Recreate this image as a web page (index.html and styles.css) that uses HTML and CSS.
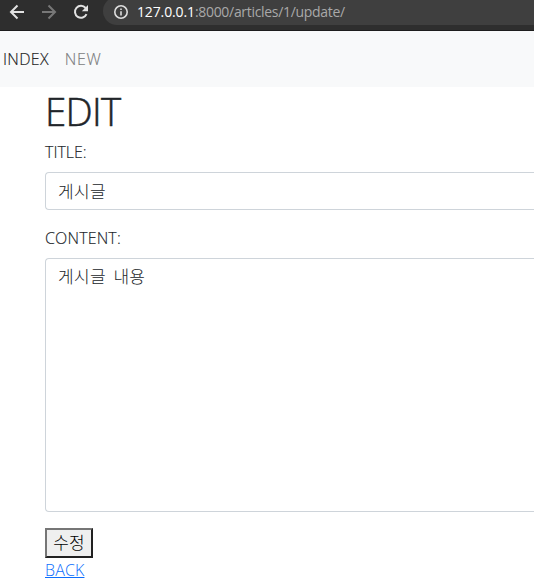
FILE: index.html
```html
<!DOCTYPE html>
<html lang="ko">
<head>
<meta charset="utf-8">
<title>EDIT</title>
<link rel="stylesheet" href="styles.css">
</head>
<body>
<header class="browser">
  <svg class="icon back" width="16" height="16" viewBox="0 0 16 16"><path d="M15 8H2M8.500 1.500L2 8l6.500 6.500"/></svg>
  <svg class="icon forward" width="16" height="16" viewBox="0 0 16 16"><path d="M1 8h13M7.500 1.500L14 8l-6.500 6.500"/></svg>
  <svg class="icon reload" width="16" height="16" viewBox="0 0 16 16"><path d="M13.500 10.200A6 6 0 1 1 12.600 4"/><path class="solid" d="M15 1v6.200H8.800z"/></svg>
  <div class="address">
    <svg class="info" width="14" height="14" viewBox="0 0 14 14"><circle cx="7" cy="7" r="6.200"/><path d="M7 6.200v4.300M7 3.400v1.600"/></svg>
    <span class="url"><span class="host">127.0.0.1</span><span class="path">:8000/articles/1/update/</span></span>
  </div>
</header>
<nav class="navbar">
  <a class="nav-link active">INDEX</a>
  <a class="nav-link">NEW</a>
</nav>
<main class="container">
  <h1>EDIT</h1>
  <form>
    <label for="title">TITLE:</label>
    <input id="title" class="control" type="text" value="게시글">
    <label class="wide" for="content">CONTENT:</label>
    <textarea id="content" class="control">게시글 내용</textarea>
    <button type="button">수정</button>
  </form>
  <a class="back-link" href="#">BACK</a>
</main>
</body>
</html>
```
FILE: styles.css
```css
* { box-sizing: border-box; }
body {
  margin: 0;
  height: 583px;
  overflow: hidden;
  background: #fff;
  color: #212529;
  font: 300 16px/24px "Open Sans", "Noto Sans CJK KR", sans-serif;
}
.browser {
  display: flex;
  height: 31px;
  padding: 0 0 6px 9px;
  align-items: center;
  background: #2e2e2e;
  border-bottom: 1px solid #1d1d1d;
  overflow: hidden;
}
.icon { flex: none; fill: none; stroke: #e2e2e2; stroke-width: 2; }
.forward { margin-left: 16px; stroke: #777; }
.reload { margin-left: 16px; }
.reload .solid { fill: #e2e2e2; stroke: none; }
.address {
  flex: 1;
  display: flex;
  align-items: center;
  height: 28px;
  margin: -2px 0 0 14px;
  padding: 2px 0 0 11px;
  border-radius: 14px 0 0 14px;
  background: #3f3f3f;
}
.info { fill: none; stroke: #dedede; stroke-width: 1.600; }
.url { margin-left: 9px; font-size: 14px; font-weight: 400; line-height: 20px; white-space: nowrap; }
.host { color: #fff; letter-spacing: -0.130px; }
.path { color: #a9a9a9; letter-spacing: -0.310px; }
.navbar {
  display: flex;
  gap: 16px;
  height: 56px;
  padding: 16px 0 0 3px;
  background: #f8f9fa;
}
.nav-link { color: #7b7c7d; letter-spacing: 0.300px; -webkit-text-stroke: 0.150px currentColor; }
.nav-link + .nav-link { letter-spacing: 0.600px; }
.active { color: #1a1b1b; }
.container { padding-left: 45px; }
h1 {
  margin: 0;
  font-size: 38.500px;
  font-weight: 300;
  line-height: 48px;
  letter-spacing: -0.700px;
  -webkit-text-stroke: 0.500px currentColor;
}
form { margin-top: 5px; }
label { display: block; width: max-content; margin-bottom: 8px; -webkit-text-stroke: 0.150px currentColor; }
.wide { letter-spacing: 0.150px; }
.control {
  display: block;
  width: 100%;
  height: 38px;
  margin: 0 0 16px;
  padding: 5px 0 7px 12px;
  border: 1px solid #ced4da;
  border-right: 0;
  border-radius: 4px 0 0 4px;
  background: #fff;
  color: #212529;
  font: 300 17px/24px "Noto Sans CJK KR", sans-serif;
  letter-spacing: 0.300px;
  word-spacing: 2.500px;
}
textarea.control { height: 254px; resize: none; overflow: hidden; }
button {
  display: block;
  width: 48px;
  height: 30px;
  padding: 0 0 2px;
  border: 2px solid;
  border-color: #767676 #212121 #212121 #767676;
  background: #efefef;
  color: #000;
  font: 300 17px/24px "Noto Sans CJK KR", sans-serif;
}
.back-link { color: #0d6efd; text-decoration: underline; letter-spacing: 0.150px; }
```
